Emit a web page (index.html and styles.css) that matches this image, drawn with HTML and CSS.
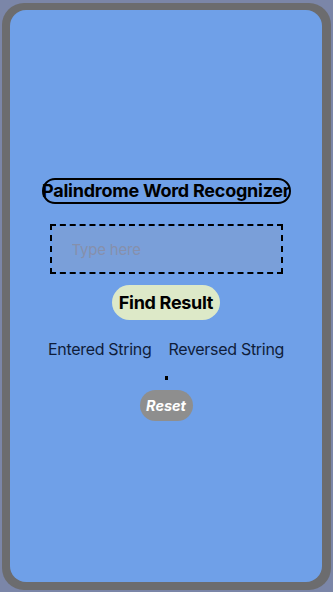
FILE: index.html
```html
<!DOCTYPE html>
<html lang="en">
<head>
<meta charset="utf-8">
<meta name="viewport" content="width=device-width, initial-scale=1">
<title>Palindrome Word Recognizer</title>
<link rel="stylesheet" href="styles.css">
</head>
<body>
<div class="frame">
  <main class="screen">
    <h1 class="title">Palindrome Word Recognizer</h1>
    <div class="input-wrap">
      <input class="word-input" type="text" placeholder="Type here">
    </div>
    <button class="find-btn" type="button">Find Result</button>
    <div class="labels">
      <span class="label">Entered String</span>
      <span class="label">Reversed String</span>
    </div>
    <div class="dot"></div>
    <button class="reset-btn" type="button">Reset</button>
  </main>
</div>
</body>
</html>
```

FILE: styles.css
```css
* { box-sizing: border-box; }
html, body { margin: 0; padding: 0; }
body {
  background: #7b86a8;
  font-family: Inter, "Noto Sans", "Liberation Sans", sans-serif;
  width: 333px;
  height: 592px;
  overflow: hidden;
}
.frame {
  margin: 3px 2px 0 2px;
  width: 329px;
  height: 587px;
  background: #6c6c6e;
  border-radius: 22px;
  padding: 7px 9px 8px 8px;
}
.screen {
  height: 100%;
  background: #6fa0e8;
  border-radius: 16px;
  display: flex;
  flex-direction: column;
  align-items: center;
  padding-top: 168px;
}
.title {
  margin: 0;
  width: 249px;
  height: 26px;
  border: 2px solid #000;
  border-radius: 13px;
  font-size: 18px;
  font-weight: 700;
  line-height: 22px;
  color: #000;
  text-align: center;
  white-space: nowrap;
  display: flex;
  justify-content: center;
  letter-spacing: -0.25px;
}
.input-wrap {
  margin-top: 20px;
  width: 233px;
  height: 50px;
  border: 2px dashed #000;
  padding: 1px;
}
.word-input {
  width: 100%;
  height: 100%;
  border: none;
  outline: none;
  background: #7a9fd9;
  font-family: inherit;
  font-size: 15px;
  color: #222;
  padding: 0 0 0 19px;
  letter-spacing: -0.2px;
}
.word-input::placeholder { color: #8690ac; opacity: 1; }
.find-btn {
  margin-top: 11px;
  width: 108px;
  height: 35px;
  border: none;
  border-radius: 18px;
  background: #dde9c8;
  font-family: inherit;
  font-size: 18px;
  font-weight: 700;
  color: #000;
  padding: 0;
  letter-spacing: -0.3px;
}
.labels {
  margin-top: 19px;
  display: flex;
  gap: 17px;
  font-size: 16px;
  color: #0f1d3a;
  line-height: 20px;
  letter-spacing: -0.3px;
}
.dot {
  margin-top: 17px;
  width: 3px;
  height: 4px;
  background: #000;
}
.reset-btn {
  margin-top: 10px;
  width: 53px;
  height: 31px;
  border: none;
  border-radius: 16px;
  background: #8e8e8e;
  font-family: inherit;
  font-size: 14.5px;
  font-weight: 700;
  font-style: italic;
  color: #fff;
  padding: 0;
}
```
